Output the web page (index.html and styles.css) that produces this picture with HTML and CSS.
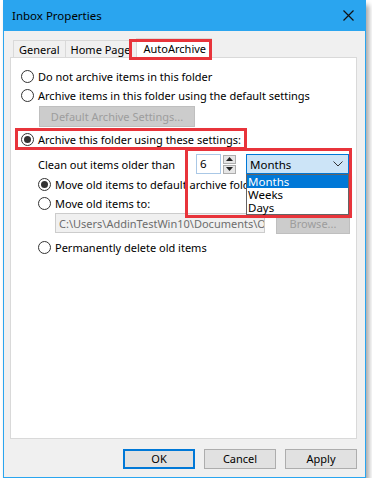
FILE: index.html
```html
<!DOCTYPE html>
<html lang="en">
<head>
    <meta charset="UTF-8">
    <title>Inbox Properties</title>
    <link rel="stylesheet" href="styles.css">
</head>
<body>

<div class="window">
    <div class="titlebar">
        <span class="title">Inbox Properties</span>
        <svg class="close" width="11" height="11" viewBox="0 0 11 11"><path d="M0.5 0.5 L10.5 10.5 M10.5 0.5 L0.5 10.5" stroke="#111" stroke-width="1.2"/></svg>
    </div>

    <div class="tabs">
        <div class="tab">General</div>
        <div class="tab">Home Page</div>
        <div class="tab active">AutoArchive</div>
    </div>

    <div class="panel">
        <label class="radio"><span class="dot"></span>Do not archive items in this folder</label>
        <label class="radio"><span class="dot"></span>Archive items in this folder using the default settings</label>
        <div class="btn disabled wide">Default Archive Settings...</div>
        <label class="radio"><span class="dot on"></span>Archive this folder using these settings:</label>

        <div class="sub">
            <div class="clean-row">
                <span class="clean-label">Clean out items older than</span>
                <div class="num">6</div>
                <div class="spin">
                    <div class="arrow"><svg width="7" height="4" viewBox="0 0 7 4"><path d="M0 4 L3.5 0 L7 4Z" fill="#222"/></svg></div>
                    <div class="arrow"><svg width="7" height="4" viewBox="0 0 7 4"><path d="M0 0 L3.5 4 L7 0Z" fill="#222"/></svg></div>
                </div>
                <div class="select">
                    <span>Months</span>
                    <svg width="10" height="6" viewBox="0 0 10 6"><path d="M0.5 0.5 L5 5 L9.5 0.5" stroke="#333" fill="none"/></svg>
                    <div class="dropdown">
                        <div class="opt sel">Months</div>
                        <div class="opt">Weeks</div>
                        <div class="opt">Days</div>
                    </div>
                </div>
            </div>
            <label class="radio"><span class="dot on"></span>Move old items to default archive folder</label>
            <label class="radio"><span class="dot"></span>Move old items to:</label>
            <div class="path-row">
                <div class="path">C:\Users\AddinTestWin10\Documents\Outlook Files\archive.pst</div>
                <div class="btn disabled browse">Browse...</div>
            </div>
            <label class="radio"><span class="dot"></span>Permanently delete old items</label>
        </div>

        <div class="mark mark-tab"></div>
        <div class="mark mark-radio"></div>
        <div class="mark mark-period"></div>
    </div>

    <div class="footer">
        <div class="btn ok">OK</div>
        <div class="btn">Cancel</div>
        <div class="btn">Apply</div>
    </div>
</div>

</body>
</html>
```

FILE: styles.css
```css
body {
    margin: 0;
    background: #fff;
    font-family: "Noto Sans", "Open Sans", sans-serif;
    font-size: 11px;
    color: #000;
}
.window {
    margin-left: 3px;
    width: 361px;
    height: 477px;
    border: 1px solid #2aa5ef;
    border-top: none;
    background: #f0f0f0;
    box-shadow: 3px 5px 5px rgba(0, 0, 0, 0.35);
    display: flex;
    flex-direction: column;
    position: relative;
}
.titlebar {
    height: 31px;
    background: #2aa5ef;
    display: flex;
    align-items: center;
    justify-content: space-between;
    padding: 0 11px 0 8px;
}
.title {
    font-size: 11.5px;
}
.tabs {
    display: flex;
    margin: 8px 0 0 9px;
    height: 18px;
    position: relative;
    z-index: 1;
}
.tab {
    border: 1px solid #d9d9d9;
    border-bottom: none;
    border-right: none;
    padding: 0 5px;
    line-height: 17px;
    margin-top: 1px;
    background: #f0f0f0;
}
.tab.active {
    background: #fff;
    margin-top: -1px;
    line-height: 19px;
    height: 21px;
    padding: 0 5px 0 7px;
    border-right: 1px solid #d9d9d9;
}
.panel {
    position: relative;
    margin: 0 8px 0 6px;
    height: 382px;
    background: #fff;
    border: 1px solid #d9d9d9;
    padding: 9px 0 0 10px;
    box-sizing: border-box;
}
.radio {
    display: flex;
    align-items: center;
    height: 19px;
}
.dot {
    width: 11px;
    height: 11px;
    border: 1px solid #333;
    border-radius: 50%;
    margin-right: 4px;
    flex-shrink: 0;
    position: relative;
}
.dot.on::after {
    content: "";
    position: absolute;
    left: 2px;
    top: 2px;
    width: 7px;
    height: 7px;
    border-radius: 50%;
    background: #333;
}
.btn {
    border: 1px solid #adadad;
    background: #e1e1e1;
    text-align: center;
    line-height: 19px;
    width: 70px;
}
.btn.disabled {
    background: #cccccc;
    border-color: #bfbfbf;
    color: #9d9d9d;
}
.wide {
    width: 154px;
    margin: 1px 0 3px 18px;
    line-height: 19px;
}
.sub {
    padding-left: 17px;
}
.clean-row {
    display: flex;
    align-items: center;
    margin-top: 4px;
    height: 22px;
}
.clean-label {
    width: 158px;
}
.num {
    width: 20px;
    height: 18px;
    border: 1px solid #aac8e6;
    line-height: 18px;
    padding-left: 3px;
    font-size: 11.5px;
}
.spin {
    margin-left: 2px;
    display: flex;
    flex-direction: column;
    gap: 1px;
}
.arrow {
    width: 13px;
    height: 9px;
    border: 1px solid #adadad;
    background: #e6e6e6;
    box-sizing: border-box;
    display: flex;
    align-items: center;
    justify-content: center;
}
.select {
    margin-left: 10px;
    width: 103px;
    height: 20px;
    background: #cce4f7;
    border: 1px solid #0078d7;
    box-sizing: border-box;
    display: flex;
    align-items: center;
    justify-content: space-between;
    padding: 0 5px 0 3px;
    font-size: 11.5px;
    position: relative;
}
.dropdown {
    position: absolute;
    left: -1px;
    top: 19px;
    width: 103px;
    background: #fff;
    border: 1px solid #646464;
    box-sizing: border-box;
    box-shadow: 2px 2px 2px rgba(0, 0, 0, 0.25);
    z-index: 2;
}
.opt {
    line-height: 13px;
    padding-left: 1px;
}
.opt.sel {
    background: #0078d7;
    color: #fff;
}
.path-row {
    display: flex;
    gap: 11px;
    margin: 0 0 4px 17px;
}
.path {
    width: 210px;
    height: 20px;
    overflow: hidden;
    white-space: nowrap;
    border: 1px solid #cccccc;
    background: #f0f0f0;
    color: #6d6d6d;
    line-height: 19px;
    padding-left: 3px;
    box-sizing: border-box;
}
.browse {
    width: 72px;
    line-height: 19px;
}
.mark {
    position: absolute;
    border: 3px solid #e8343b;
    z-index: 3;
}
.mark-tab {
    left: 118px;
    top: -19px;
    width: 77px;
    height: 15px;
}
.mark-radio {
    left: 4px;
    top: 70px;
    width: 226px;
    height: 16px;
}
.mark-period {
    left: 174px;
    top: 90px;
    width: 161px;
    height: 64px;
}
.footer {
    margin-top: auto;
    margin-bottom: 8px;
    display: flex;
    justify-content: flex-end;
    gap: 9px;
    padding-right: 8px;
}
.footer .btn {
    width: 72px;
    box-sizing: border-box;
    line-height: 18px;
}
.btn.ok {
    border: 2px solid #0078d7;
    line-height: 16px;
}
```
